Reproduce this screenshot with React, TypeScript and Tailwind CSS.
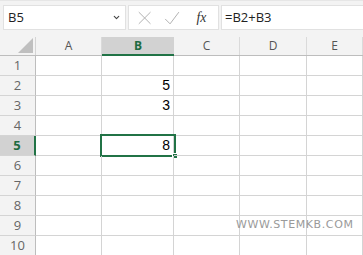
import { ChevronDown } from 'lucide-react'

const cols = [
  { key: 'A', w: 'w-[66px]' },
  { key: 'B', w: 'w-[72px]' },
  { key: 'C', w: 'w-[66px]' },
  { key: 'D', w: 'w-[67px]' },
  { key: 'E', w: 'flex-1' },
]

const values: Record<string, string> = { B2: '5', B3: '3', B5: '8' }

export default function App() {
  return (
    <div className="relative w-[363px] h-[255px] overflow-hidden bg-white font-['Liberation_Sans',sans-serif]">
      {/* formula bar */}
      <div className="h-[37px] bg-[#f3f3f3] border-t border-[#e6e6e6] flex items-start pt-[4px] pl-[3px] gap-[2px]">
        <div className="w-[123px] h-[25px] bg-white border border-[#e1e1e1] flex items-center justify-between pl-[4px] pr-[4px]">
          <span className="text-[13px] text-[#222] font-['Open_Sans',sans-serif]">B5</span>
          <ChevronDown className="w-[9px] h-[9px] text-[#444]" strokeWidth={3} />
        </div>
        <div className="w-[91px] h-[25px] bg-white border border-[#e1e1e1] flex items-center">
          <svg width="91" height="23" viewBox="0 0 91 23">
            <path d="M10 6 L22 18 M22 6 L10 18" stroke="#b0b0b0" strokeWidth="1" fill="none" />
            <path d="M37 13 L42 18 L51 6" stroke="#b0b0b0" strokeWidth="1" fill="none" />
            <text x="69" y="16" fontFamily="'Liberation Serif', serif" fontStyle="italic" fontSize="14" fill="#333">fx</text>
          </svg>
        </div>
        <div className="flex-1 h-[25px] bg-white border border-[#e1e1e1] border-r-0 flex items-center pl-[3px]">
          <span className="text-[13px] text-[#222] font-['Open_Sans',sans-serif]">=B2+B3</span>
        </div>
      </div>

      {/* sheet */}
      <div className="flex flex-col">
        <div className="flex h-[19px] bg-[#f3f3f3] border-b border-[#bdbdbd]">
          <div className="w-[36px] border-r border-[#d4d4d4] flex items-end justify-end pr-[2px] pb-[2px]">
            <svg width="15" height="15" viewBox="0 0 15 15">
              <path d="M15 0 L15 15 L0 15 Z" fill="#bfbfbf" />
            </svg>
          </div>
          {cols.map((c) => (
            <div
              key={c.key}
              className={`${c.w} flex items-center justify-center text-[12px] font-['Open_Sans',sans-serif] ${
                c.key === 'B'
                  ? 'bg-[#d2d2d2] text-[#1e6b41] font-bold border-b-2 border-[#217346] -mb-[1px]'
                  : 'text-[#555] border-r border-[#dadada]'
              }`}
            >
              {c.key}
            </div>
          ))}
        </div>

        {Array.from({ length: 10 }, (_, i) => i + 1).map((r) => (
          <div key={r} className="flex h-[20px]">
            <div
              className={`w-[36px] flex items-center justify-center text-[13px] font-['Open_Sans',sans-serif] border-b border-[#d4d4d4] ${
                r === 5
                  ? 'bg-[#d2d2d2] text-[#1e6b41] font-bold border-r-2 border-r-[#217346]'
                  : 'bg-[#f3f3f3] text-[#666] border-r border-r-[#bdbdbd]'
              }`}
            >
              {r}
            </div>
            {cols.map((c) => {
              const id = `${c.key}${r}`
              return (
                <div
                  key={id}
                  className={`${c.w} relative flex items-center justify-end pr-[3px] text-[14px] text-black border-b border-r border-[#d4d4d4]`}
                >
                  {values[id]}
                  {id === 'B5' && (
                    <div className="absolute -left-[2px] -top-[2px] w-[76px] h-[23px] border-2 border-[#217346]">
                      <div className="absolute -right-[4px] -bottom-[4px] w-[6px] h-[6px] bg-[#217346] border border-white" />
                    </div>
                  )}
                </div>
              )
            })}
          </div>
        ))}
      </div>

      <div className="absolute left-[236px] top-[217px] text-[11px] tracking-[0.6px] text-[#9a9a9a] font-['DejaVu_Sans',sans-serif]">
        WWW.STEMKB.COM
      </div>
    </div>
  )
}
